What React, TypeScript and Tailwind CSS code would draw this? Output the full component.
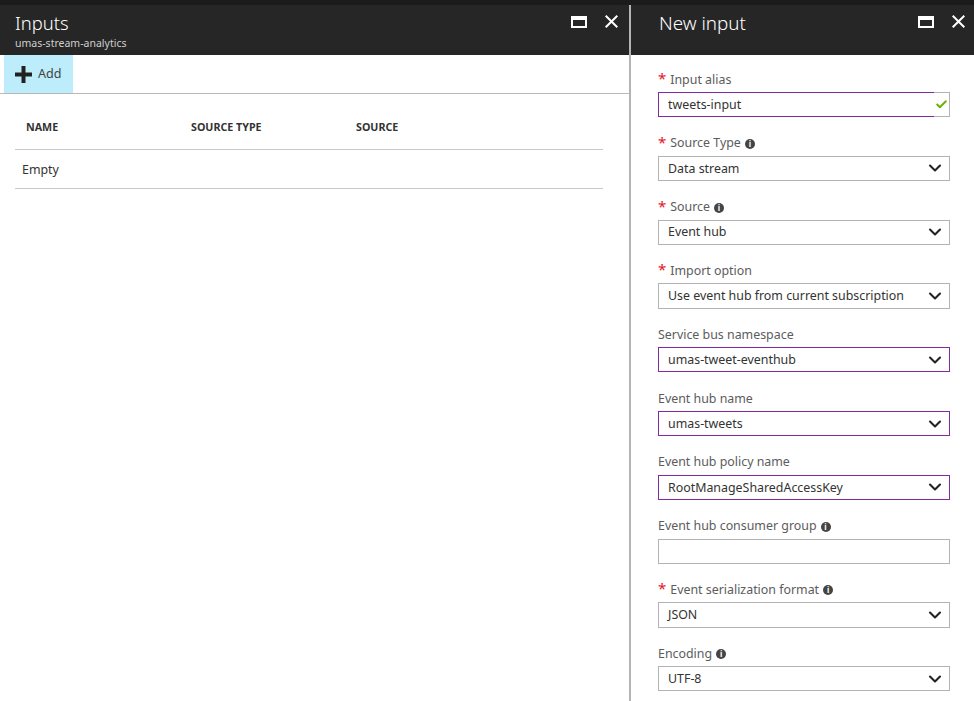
import { Check, ChevronDown } from "lucide-react";

type Field = {
  label: string;
  value: string;
  required?: boolean;
  info?: boolean;
  kind?: "select" | "text";
  active?: boolean;
};

const fields: Field[] = [
  { label: "Input alias", value: "tweets-input", required: true, kind: "text", active: true },
  { label: "Source Type", value: "Data stream", required: true, info: true },
  { label: "Source", value: "Event hub", required: true, info: true },
  { label: "Import option", value: "Use event hub from current subscription", required: true },
  { label: "Service bus namespace", value: "umas-tweet-eventhub", active: true },
  { label: "Event hub name", value: "umas-tweets", active: true },
  { label: "Event hub policy name", value: "RootManageSharedAccessKey", active: true },
  { label: "Event hub consumer group", value: "", info: true, kind: "text" },
  { label: "Event serialization format", value: "JSON", required: true, info: true },
  { label: "Encoding", value: "UTF-8", info: true },
];

function BladeControls() {
  return (
    <div className="flex items-center gap-[18px]">
      <span className="h-[12px] w-[16px] border-2 border-t-[4px] border-white" />
      <svg width="13" height="13" viewBox="0 0 13 13" className="text-white">
        <path d="M0.7 0.7 12.3 12.3M12.3 0.7 0.7 12.3" stroke="currentColor" strokeWidth="2" fill="none" />
      </svg>
    </div>
  );
}

function InfoDot() {
  return (
    <span className="ml-[4px] flex h-[10px] w-[10px] items-center justify-center rounded-full bg-[#444] text-[8px] font-bold leading-none text-white">
      i
    </span>
  );
}

function FormField({ field }: { field: Field }) {
  return (
    <div className="h-[63.8px] shrink-0">
      <div className="flex h-[24px] items-center text-[12.4px] text-[#5c5c5c]">
        {field.required && (
          <span className="mr-[4px] mt-[-3px] text-[15px] leading-none text-[#e81123]">*</span>
        )}
        <span>{field.label}</span>
        {field.info && <InfoDot />}
      </div>
      <div
        className={`relative flex h-[25.3px] items-center border pl-[9px] pr-[4px] text-[12.4px] text-[#333] ${
          field.active ? "border-[#7f2a9e]" : "border-[#b3b3b3]"
        }`}
      >
        <span className="flex-1 pt-[1px]">{field.value}</span>
        {field.kind !== "text" && <ChevronDown className="h-[20px] w-[20px] text-[#222]" strokeWidth={2.5} />}
        {field.kind === "text" && field.active && (
          <span className="absolute inset-y-[-1px] right-[-1px] flex w-[16px] items-center justify-center border-y border-r border-[#b3b3b3] bg-white">
            <Check className="h-[13px] w-[13px] text-[#6cb000]" strokeWidth={3.5} />
          </span>
        )}
      </div>
    </div>
  );
}

export default function App() {
  return (
    <div className="flex h-[701px] w-[974px] flex-col overflow-hidden bg-white font-['Noto_Sans',sans-serif]">
      <div className="h-[5px] shrink-0 bg-[#1b1b1b]" />
      <div className="flex min-h-0 flex-1">
        <div className="flex w-[629px] flex-col">
          <header className="flex h-[50px] shrink-0 justify-between bg-[#262626] pl-[15px] pr-[11px] pt-[5px]">
            <div>
              <h1 className="text-[18.4px] font-light leading-[26px] text-white">Inputs</h1>
              <p className="text-[10.5px] leading-[14px] text-[#cfcfcf]">umas-stream-analytics</p>
            </div>
            <div className="pt-[5px]">
              <BladeControls />
            </div>
          </header>

          <div className="h-[39px] shrink-0 border-b border-[#b9b9b9] pl-[4px]">
            <button className="flex h-full w-[69px] items-center gap-[6px] bg-[#bdecfb] pl-[11px] text-[12.6px] text-[#444]">
              <svg width="17" height="17" viewBox="0 0 17 17" className="text-[#222]">
                <path d="M6.5 0h4v6.5H17v4h-6.5V17h-4v-6.5H0v-4h6.5z" fill="currentColor" />
              </svg>
              <span className="pt-[1px]">Add</span>
            </button>
          </div>

          <div className="ml-[15px] mr-[26px] mt-[16px]">
            <div className="grid h-[40px] grid-cols-[165px_165px_1fr] items-center border-b border-[#c8c8c8] pb-[4px] pl-[11px] text-[10.7px] font-bold text-[#333]">
              <span>NAME</span>
              <span>SOURCE TYPE</span>
              <span>SOURCE</span>
            </div>
            <div className="flex h-[39px] items-center border-b border-[#c8c8c8] pl-[7px] pt-[2px] text-[12.4px] text-[#333]">
              Empty
            </div>
          </div>
        </div>

        <div className="w-[2px] bg-[#b4b4b4]" />

        <div className="flex min-h-0 flex-1 flex-col">
          <header className="flex h-[50px] shrink-0 justify-between bg-[#262626] pl-[28px] pr-[9px] pt-[5px]">
            <h1 className="text-[18.8px] font-light leading-[26px] text-white">New input</h1>
            <div className="pt-[5px]">
              <BladeControls />
            </div>
          </header>
          <div className="pl-[27px] pr-[24px] pt-[13px]">
            {fields.map((field) => (
              <FormField key={field.label} field={field} />
            ))}
          </div>
        </div>
      </div>
    </div>
  );
}
